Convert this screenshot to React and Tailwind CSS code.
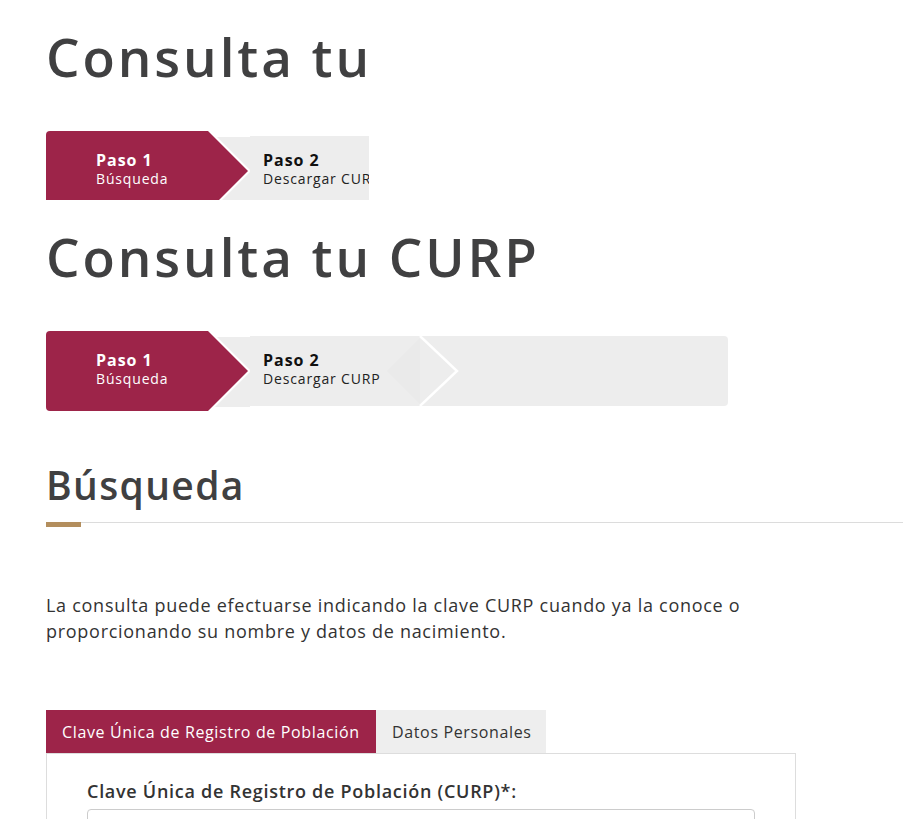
const RED = "bg-[#9d2449]";

function Stepper() {
  return (
    <div className="flex h-[80px] w-[682px] items-center">
      <div className={`flex h-full w-[162px] flex-col justify-center rounded-l-[4px] ${RED} pb-[4px] pl-[50px] text-white`}>
        <span className="text-[16px] font-bold leading-[20px] tracking-[0.06em]">Paso 1</span>
        <span className="text-[14px] leading-[18px] tracking-[0.06em]">Búsqueda</span>
      </div>
      <svg width="42" height="80" viewBox="0 0 42 80" className="shrink-0">
        <rect x="0" y="6" width="42" height="70" fill="#ededed" />
        <polygon points="0,-3 43,40 0,83" fill="#ffffff" />
        <polygon points="0,0 40,40 0,80" fill="#9d2449" />
      </svg>
      <div className="flex h-[70px] w-[135px] shrink-0 flex-col justify-center bg-[#ededed] pb-[4px] pl-[13px] text-[#111]">
        <span className="whitespace-nowrap text-[16px] font-bold leading-[20px] tracking-[0.06em]">Paso 2</span>
        <span className="whitespace-nowrap text-[14px] leading-[18px] tracking-[0.06em] text-[#222]">Descargar CURP</span>
      </div>
      <svg width="75" height="70" viewBox="0 0 75 70" className="shrink-0">
        <rect x="0" y="0" width="75" height="70" fill="#ededed" />
        <polygon points="2,35 35,2 35,68" fill="#eaeaea" />
        <polyline points="35,0 72,35 35,70" fill="none" stroke="#ffffff" strokeWidth="2.5" />
      </svg>
      <div className="h-[70px] flex-1 rounded-r-[4px] bg-[#ededed]" />
    </div>
  );
}

function Header() {
  return (
    <div className="pl-[46px] pt-[26px]">
      <h1 className="whitespace-nowrap text-[53px] font-semibold leading-[62px] tracking-[0.055em] text-[#404041]">Consulta tu CURP</h1>
      <div className="mt-[43px]">
        <Stepper />
      </div>
    </div>
  );
}

export default function App() {
  return (
    <div className="min-h-screen overflow-hidden bg-white font-['Open_Sans',sans-serif] text-[#404041]">
      <div className="h-[200px] w-[369px] overflow-hidden">
        <Header />
      </div>
      <Header />

      <div className="pl-[46px]">
        <h2 className="mt-[51px] text-[39px] font-semibold leading-[46px] tracking-[0.035em] text-[#404041]">Búsqueda</h2>
        <div className="mt-[14px] h-px w-[857px] bg-[#dcdcdc]">
          <div className="h-[5px] w-[35px] bg-[#b38e5d]" />
        </div>

        <p className="mt-[69px] w-[740px] text-[18px] leading-[26px] tracking-[0.04em] text-[#333]">
          La consulta puede efectuarse indicando la clave CURP cuando ya la conoce o proporcionando su nombre y datos de nacimiento.
        </p>

        <div className="mt-[66px] flex h-[43px] text-[16px] tracking-[0.04em]">
          <button className={`flex w-[330px] items-center whitespace-nowrap ${RED} px-4 text-white`}>
            Clave Única de Registro de Población
          </button>
          <button className="flex w-[170px] items-center whitespace-nowrap bg-[#eeeeee] px-4 text-[#333]">
            Datos Personales
          </button>
        </div>
        <div className="w-[750px] border border-[#dddddd] px-10 pt-[25px] pb-10">
          <label className="block text-[18px] font-semibold leading-[24px] tracking-[0.04em] text-[#333]">
            Clave Única de Registro de Población (CURP)*:
          </label>
          <input type="text" className="mt-[6px] block h-[36px] w-full rounded-[4px] border border-[#cccccc] px-3" />
        </div>
      </div>
    </div>
  );
}
